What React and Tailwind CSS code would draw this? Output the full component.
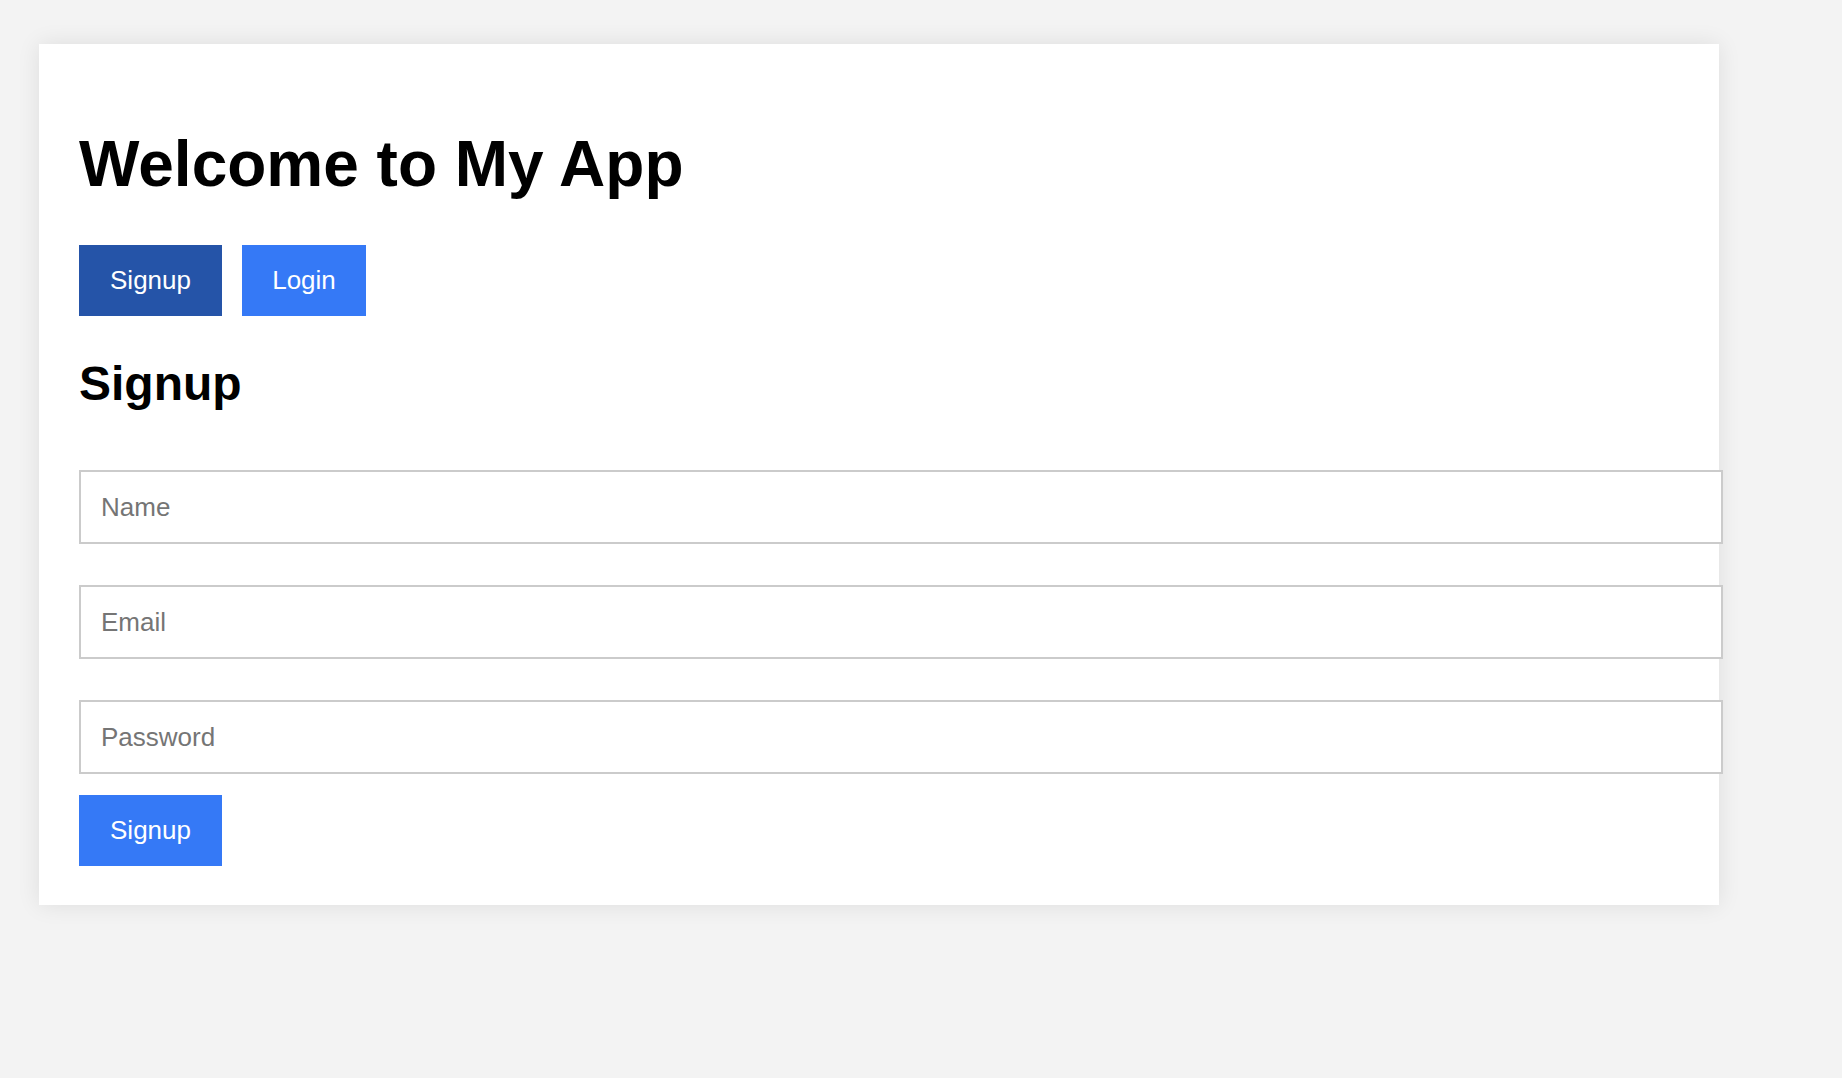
import { useState } from 'react';

const App = () => {
  const [mode, setMode] = useState('signup');
  const [form, setForm] = useState({ name: '', email: '', password: '' });

  const handleChange = (e) => setForm({ ...form, [e.target.name]: e.target.value });

  const tabClass = (active) =>
    `h-[71px] text-[26px] text-white ${active ? 'bg-[#2554a8]' : 'bg-[#3579f6]'}`;

  const inputClass =
    'block w-[1644px] h-[74px] px-[20px] border-2 border-[#cbcbcb] bg-white text-[26px] text-black placeholder:text-[#757575] outline-none';

  return (
    <div className="min-h-screen bg-[#f3f3f3] pt-[44px] pl-[39px] font-['Liberation_Sans',Arial,sans-serif]">
      <div className="w-[1680px] bg-white px-[40px] pt-[40px] pb-[39px] shadow-[0_0_22px_rgba(0,0,0,0.09)]">
        <h1 className="mt-[43px] mb-[44px] text-[64px] leading-[74px] font-bold text-black">Welcome to My App</h1>

        <div className="flex gap-[20px]">
          <button onClick={() => setMode('signup')} className={`w-[143px] ${tabClass(mode === 'signup')}`}>
            Signup
          </button>
          <button onClick={() => setMode('login')} className={`w-[124px] ${tabClass(mode === 'login')}`}>
            Login
          </button>
        </div>

        <h2 className="mt-[40px] text-[48px] leading-[55px] font-bold text-black">
          {mode === 'signup' ? 'Signup' : 'Login'}
        </h2>

        <form onSubmit={(e) => e.preventDefault()}>
          {mode === 'signup' && (
            <input name="name" value={form.name} onChange={handleChange} placeholder="Name" className={`mt-[59px] ${inputClass}`} />
          )}
          <input
            name="email"
            value={form.email}
            onChange={handleChange}
            placeholder="Email"
            className={`${mode === 'signup' ? 'mt-[41px]' : 'mt-[59px]'} ${inputClass}`}
          />
          <input
            name="password"
            type="password"
            value={form.password}
            onChange={handleChange}
            placeholder="Password"
            className={`mt-[41px] ${inputClass}`}
          />
          <button type="submit" className="mt-[21px] w-[143px] h-[71px] bg-[#3579f6] text-[26px] text-white">
            {mode === 'signup' ? 'Signup' : 'Login'}
          </button>
        </form>
      </div>
    </div>
  );
};

export default App;
